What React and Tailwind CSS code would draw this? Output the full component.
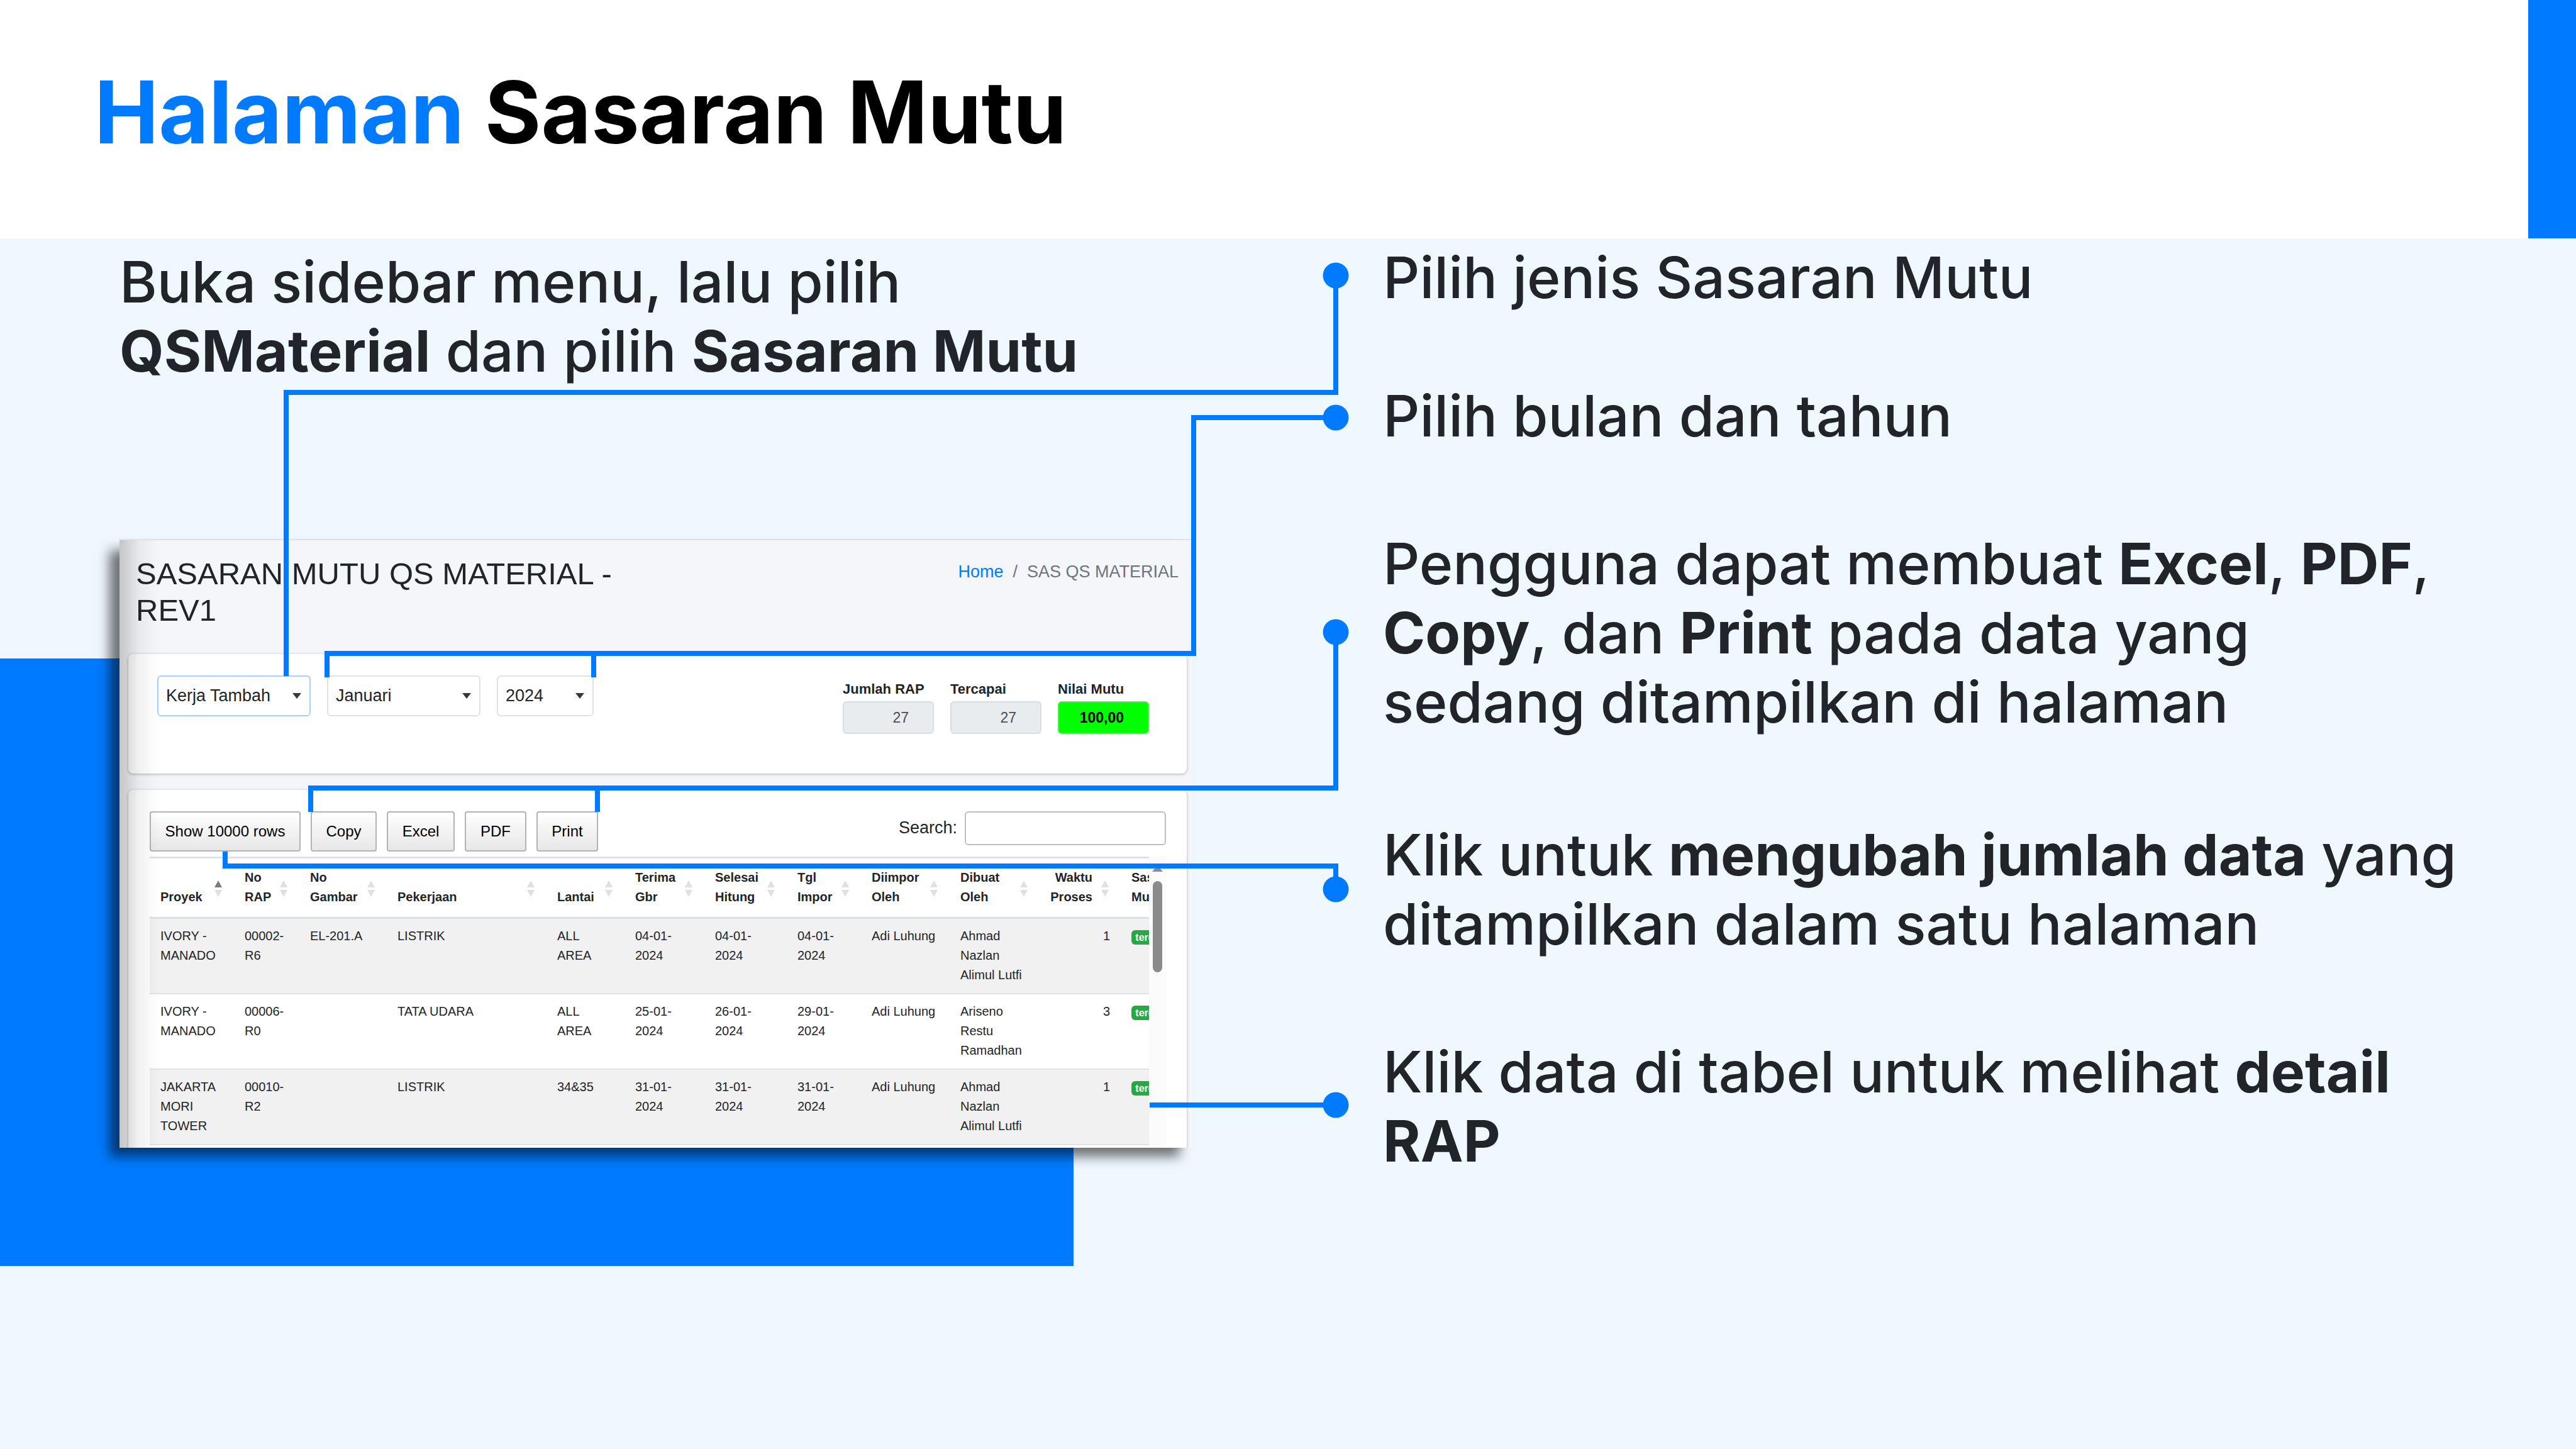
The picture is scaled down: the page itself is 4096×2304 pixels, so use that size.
import React from "react";

const COLUMNS = [
  { id: "proyek", lines: ["", "Proyek"], width: "w-[134px]", active: true },
  { id: "norap", lines: ["No", "RAP"], width: "w-[104px]" },
  { id: "gambar", lines: ["No", "Gambar"], width: "w-[139px]" },
  { id: "pekerjaan", lines: ["", "Pekerjaan"], width: "w-[254px]" },
  { id: "lantai", lines: ["", "Lantai"], width: "w-[124px]" },
  { id: "terima", lines: ["Terima", "Gbr"], width: "w-[127px]" },
  { id: "selesai", lines: ["Selesai", "Hitung"], width: "w-[131px]" },
  { id: "tgl", lines: ["Tgl", "Impor"], width: "w-[118px]" },
  { id: "diimpor", lines: ["Diimpor", "Oleh"], width: "w-[141px]" },
  { id: "dibuat", lines: ["Dibuat", "Oleh"], width: "w-[143px]" },
  { id: "waktu", lines: ["Waktu", "Proses"], width: "w-[129px]", right: true },
  { id: "sasaran", lines: ["Sasaran", "Mutu"], width: "w-[150px]" },
];

const ROWS = [
  [["IVORY -", "MANADO"], ["00002-", "R6"], ["EL-201.A"], ["LISTRIK"], ["ALL", "AREA"], ["04-01-", "2024"], ["04-01-", "2024"], ["04-01-", "2024"], ["Adi Luhung"], ["Ahmad", "Nazlan", "Alimul Lutfi"], ["1"]],
  [["IVORY -", "MANADO"], ["00006-", "R0"], [""], ["TATA UDARA"], ["ALL", "AREA"], ["25-01-", "2024"], ["26-01-", "2024"], ["29-01-", "2024"], ["Adi Luhung"], ["Ariseno", "Restu", "Ramadhan"], ["3"]],
  [["JAKARTA", "MORI", "TOWER"], ["00010-", "R2"], [""], ["LISTRIK"], ["34&35"], ["31-01-", "2024"], ["31-01-", "2024"], ["31-01-", "2024"], ["Adi Luhung"], ["Ahmad", "Nazlan", "Alimul Lutfi"], ["1"]],
];

function Lines({ lines }) {
  return lines.map((line, i) => (
    <span key={i} className="block whitespace-nowrap">
      {line || "\u00a0"}
    </span>
  ));
}

function SortIcon({ active }) {
  return (
    <svg viewBox="0 0 12 26" className="absolute right-[19px] bottom-8 h-[26px] w-3" aria-hidden="true">
      <path d="M6 0 L12 11 H0 Z" fill={active ? "#7b7c80" : "#dfe0e1"} />
      <path d="M0 15 H12 L6 26 Z" fill="#dfe0e1" />
    </svg>
  );
}

function Select({ label, value, className }) {
  return (
    <div className={`relative ${className}`}>
      <select
        aria-label={label}
        defaultValue={value}
        className={`block h-[65px] w-full appearance-none rounded-md border-2 bg-transparent pb-[2px] pl-3 text-[27px] leading-8 text-[#212529] ${
          label === "Jenis" ? "border-[#a6d0ff]" : "border-[#dee2e6]"
        }`}
      >
        <option>{value}</option>
      </select>
      <svg viewBox="0 0 14 9" className="pointer-events-none absolute top-7 right-[15px] h-[9px] w-[14px]" aria-hidden="true">
        <path d="M0 0 H14 L7 9 Z" fill="#343a40" />
      </svg>
    </div>
  );
}

function Stat({ id, label, value, good }) {
  return (
    <div className="flex w-[145px] flex-col">
      <label htmlFor={id} className="text-[22px] leading-[26px] font-bold whitespace-nowrap text-[#212529]">
        {label}
      </label>
      <input
        id={id}
        readOnly
        value={value}
        className={`mt-[6px] h-[52px] w-full rounded-md border-2 pr-[38px] text-right text-[23px] ${
          good ? "border-[#5fe65f] bg-[#00ff00] font-bold text-black" : "border-[#d8dde2] bg-[#e9ecef] text-[#495057]"
        }`}
      />
    </div>
  );
}

function ToolButton({ children, className }) {
  return (
    <button
      type="button"
      className={`h-16 rounded-[4px] border-2 border-[#b3b3b3] bg-linear-to-b from-white to-[#e7e7e7] text-center text-[24px] leading-8 whitespace-nowrap text-black ${className}`}
    >
      {children}
    </button>
  );
}

function DataTable() {
  return (
    <div className="flex pr-[33px] pl-[34px]">
      <div className="min-w-0 flex-1 overflow-hidden">
        <table className="w-[1694px] table-fixed border-collapse text-left text-[20px] leading-[31px] text-[#212529]">
          <thead>
            <tr className="h-24 border-y-[3px] border-[#dee2e6]">
              {COLUMNS.map((c) => (
                <th key={c.id} className={`relative px-[17px] pt-[15px] align-top font-bold ${c.width}`}>
                  <div className={c.right ? "pr-7 text-right" : ""}>
                    <Lines lines={c.lines} />
                  </div>
                  <SortIcon active={c.active} />
                </th>
              ))}
            </tr>
          </thead>
          <tbody>
            {ROWS.map((row, r) => (
              <tr key={r} className="h-[120px] border-b-2 border-[#e0e3e6] odd:bg-[#f1f1f1]">
                {row.map((cell, i) => (
                  <td key={i} className={`px-[17px] pt-3 align-top ${i === 10 ? "text-right" : ""}`}>
                    <Lines lines={cell} />
                  </td>
                ))}
                <td className="px-[17px] pt-[18px] align-top">
                  <span className="block w-[74px] rounded-md bg-[#28a745] text-center text-[16px] leading-[23px] font-bold text-white">
                    tercapai
                  </span>
                </td>
              </tr>
            ))}
          </tbody>
        </table>
      </div>
      <div className="flex w-[27px] flex-col items-center bg-[#fbfbfb] pt-[14px]" aria-hidden="true">
        <svg viewBox="0 0 17 10" className="h-[10px] w-[17px]">
          <path d="M8.5 0 L17 10 H0 Z" fill="#8b8b8b" />
        </svg>
        <div className="mt-[15px] h-[145px] w-[15px] rounded-full bg-[#8b8b8b]" />
      </div>
    </div>
  );
}

function AppPanel() {
  return (
    <div className="mt-[244px] ml-[190px] w-[1706px] shadow-[-18px_16px_18px_-2px_rgba(0,0,0,0.55)]">
      <section className="relative h-[968px] overflow-hidden border-t-2 border-[#dde2e8] bg-[#f4f6f9] font-['Liberation_Sans',Arial,sans-serif] leading-8 font-normal">
        <div className="flex items-start justify-between pt-6 pr-[22px] pl-[26px]">
          <h2 className="w-[800px] text-[49px] leading-[58px] text-[#212529]">SASARAN MUTU QS MATERIAL - REV1</h2>
          <nav className="flex gap-[15px] pt-2 text-[27px] leading-9 text-[#6c757d]">
            <a href="#home" className="text-[#007bff]">Home</a>
            <span>/</span>
            <span>SAS QS MATERIAL</span>
          </nav>
        </div>

        <div className="mt-[41px] mr-[9px] ml-[14px] flex h-[190px] justify-between rounded-lg bg-white pt-[34px] pr-[60px] pl-[46px] shadow-[0_1px_4px_rgba(0,0,0,0.3)]">
          <div className="flex gap-[26px]">
            <Select label="Jenis" value="Kerja Tambah" className="w-[244px]" />
            <Select label="Bulan" value="Januari" className="w-[244px]" />
            <Select label="Tahun" value="2024" className="w-[154px]" />
          </div>
          <div className="flex gap-[26px] pt-[9px]">
            <Stat id="rap" label="Jumlah RAP" value="27" />
            <Stat id="tercapai" label="Tercapai" value="27" />
            <Stat id="mutu" label="Nilai Mutu" value="100,00" good />
          </div>
        </div>

        <div className="mt-[26px] mr-[9px] ml-[14px] h-[640px] rounded-t-lg bg-white pt-[34px] shadow-[0_1px_4px_rgba(0,0,0,0.3)]">
          <div className="flex items-start justify-between pr-[33px] pl-[34px]">
            <div className="flex gap-4">
              <ToolButton className="w-[240px]">Show 10000 rows</ToolButton>
              <ToolButton className="w-[105px]">Copy</ToolButton>
              <ToolButton className="w-[108px]">Excel</ToolButton>
              <ToolButton className="w-[98px]">PDF</ToolButton>
              <ToolButton className="w-[98px]">Print</ToolButton>
            </div>
            <div className="flex items-center gap-3">
              <label htmlFor="search" className="pb-[2px] text-[27px] text-[#212529]">Search:</label>
              <input id="search" className="h-[54px] w-[320px] rounded-md border-2 border-[#bfbfbf] bg-white px-3 text-[27px]" />
            </div>
          </div>
          <div className="mt-2">
            <DataTable />
          </div>
        </div>
        <div className="pointer-events-none absolute inset-y-0 left-0 w-16 bg-linear-to-r from-black/20 via-black/5 to-transparent" />
      </section>
    </div>
  );
}

const DOTS = [438, 664, 1005, 1414, 1757];

function Connectors() {
  return (
    <svg width="2200" height="2304" viewBox="0 0 2200 2304" className="pointer-events-none absolute top-0 left-0" aria-hidden="true">
      <g fill="none" stroke="#007bff" strokeWidth="8">
        <path d="M2124 438 V624 H455 V1075" />
        <path d="M2124 664 H1898 V1039 H520 V1077 M944 1039 V1077" />
        <path d="M2124 1005 V1253 H494 V1291 M950 1253 V1291" />
        <path d="M2124 1414 V1377 H358 V1354" />
        <path d="M2124 1757 H1828" />
      </g>
      {DOTS.map((y) => (
        <circle key={y} cx="2124" cy={y} r="20.5" fill="#007bff" />
      ))}
    </svg>
  );
}

export default function App() {
  return (
    <div className="relative isolate flex min-h-screen flex-col overflow-hidden bg-[#f0f8ff] font-['Inter',sans-serif]">
      <header className="flex h-[379px] items-start justify-between bg-white">
        <h1 className="pt-24 pl-[150px] text-[137px] leading-[164px] font-bold text-black">
          <span className="text-[#007bff]">Halaman</span> Sasaran Mutu
        </h1>
        <div className="h-full w-[76px] bg-[#007bff]" />
      </header>

      <div className="absolute top-[1047px] left-0 -z-10 h-[966px] w-[1707px] bg-[#007bff]" />

      <main className="flex flex-1 text-[91px] leading-[110px] font-medium text-[#212529]">
        <div className="w-[2199px] shrink-0">
          <p className="pt-[14px] pl-[190px] whitespace-nowrap">
            Buka sidebar menu, lalu pilih
            <br />
            <b className="font-bold">QSMaterial</b> dan pilih <b className="font-bold">Sasaran Mutu</b>
          </p>
          <AppPanel />
        </div>
        <div className="flex-1 pt-[7px] pr-[180px]">
          <p>Pilih jenis Sasaran Mutu</p>
          <p className="mt-[110px]">Pilih bulan dan tahun</p>
          <p className="mt-[125px]">
            Pengguna dapat membuat <b className="font-bold">Excel</b>, <b className="font-bold">PDF</b>,{" "}
            <b className="font-bold">Copy</b>, dan <b className="font-bold">Print</b> pada data yang sedang ditampilkan di halaman
          </p>
          <p className="mt-[133px]">
            Klik untuk <b className="font-bold">mengubah jumlah data</b> yang ditampilkan dalam satu halaman
          </p>
          <p className="mt-[125px]">
            Klik data di tabel untuk melihat <b className="font-bold">detail RAP</b>
          </p>
        </div>
      </main>
      <Connectors />
    </div>
  );
}
